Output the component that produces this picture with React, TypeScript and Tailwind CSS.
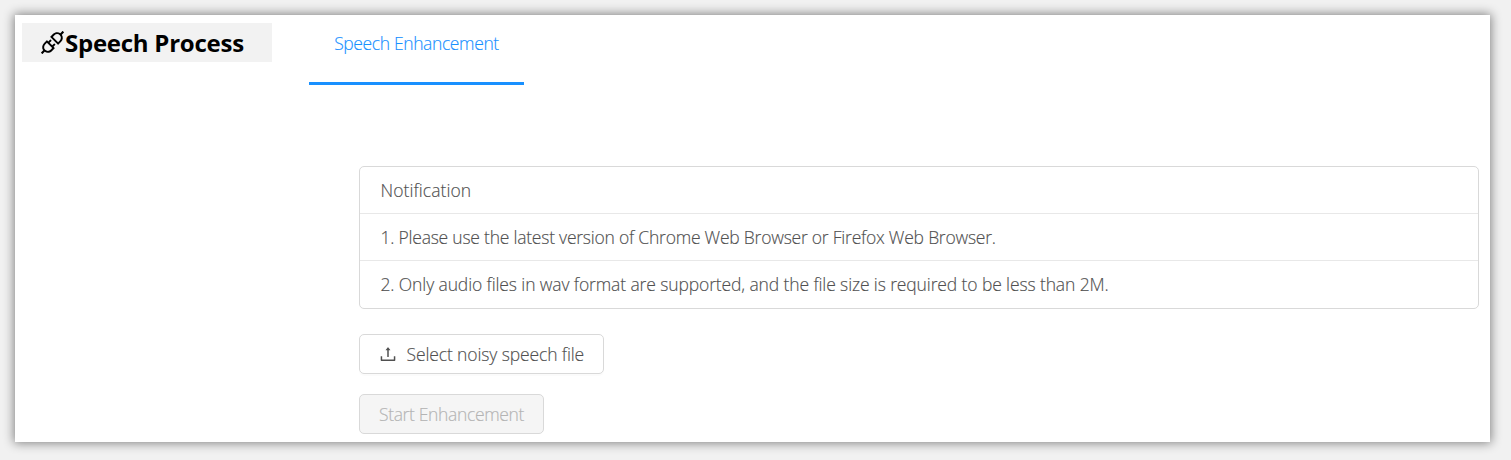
import { AiOutlineApi, AiOutlineUpload } from "react-icons/ai";

const notices = [
  { text: "Notification", cls: "h-[46px] tracking-[0.07px]" },
  {
    text: "1. Please use the latest version of Chrome Web Browser or Firefox Web Browser.",
    cls: "h-[47px] border-t border-[#e8e8e8] tracking-[-0.23px]",
  },
  {
    text: "2. Only audio files in wav format are supported, and the file size is required to be less than 2M.",
    cls: "h-[48px] border-t border-[#e8e8e8] tracking-[-0.12px]",
  },
];

export default function App() {
  return (
    <div className="h-[460px] w-[1511px] overflow-hidden bg-[#f1f1f1] pt-[15px] pl-[15px] font-['Open_Sans',sans-serif] text-[17.5px] font-light [-webkit-text-stroke:0.15px_currentColor]">
      <div className="flex h-[427px] w-[1475px] bg-white shadow-[0_0_10px_1px_rgba(0,0,0,0.47)]">
        <aside className="ml-[7px] w-[250px] shrink-0 pt-2">
          <h1 className="flex h-[39px] items-center bg-[#f2f2f2] pl-[16px] text-[24px] font-bold text-black [-webkit-text-stroke:0]">
            <AiOutlineApi className="-mr-[2px] size-[29px] shrink-0" />
            <span className="tracking-[-0.25px] whitespace-nowrap">Speech Process</span>
          </h1>
        </aside>
        <main className="ml-[37px] w-[1170px]">
          <nav className="flex">
            <a className="flex h-[70px] w-[215px] justify-center border-b-[3px] border-[#1890ff] pt-[15px] leading-[26px] tracking-[-0.38px] whitespace-nowrap text-[#1890ff]">
              <span>Speech Enhancement</span>
            </a>
          </nav>
          <section className="mt-[81px] ml-[50px] flex flex-col items-start">
            <ul className="w-[1120px] rounded-[5px] border border-[#d9d9d9] text-[#505050]">
              {notices.map((n) => (
                <li key={n.text} className={`flex items-center pl-[20.5px] whitespace-nowrap ${n.cls}`}>
                  <span>{n.text}</span>
                </li>
              ))}
            </ul>
            <button className="mt-[25px] flex h-10 w-[245px] items-center rounded-[5px] border border-[#d9d9d9] pl-[18px] tracking-[-0.12px] whitespace-nowrap text-[#505050] shadow-[0_2px_0_rgba(0,0,0,0.015)]">
              <AiOutlineUpload className="mr-[8.5px] size-[20px] shrink-0" />
              <span>Select noisy speech file</span>
            </button>
            <button
              disabled
              className="mt-5 flex h-10 w-[185px] items-center rounded-[5px] border border-[#d9d9d9] bg-[#f5f5f5] pl-[19px] tracking-[-0.35px] whitespace-nowrap text-[#b4b4b4]"
            >
              <span>Start Enhancement</span>
            </button>
          </section>
        </main>
      </div>
    </div>
  );
}
